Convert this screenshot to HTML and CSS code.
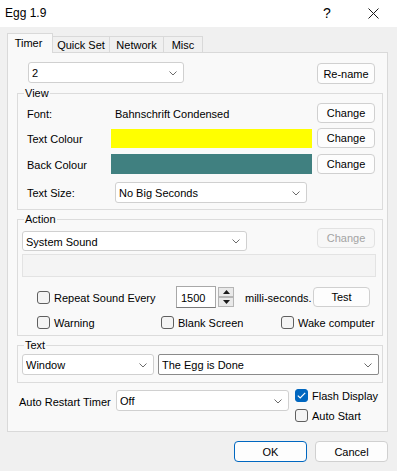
FILE: index.html
```html
<!DOCTYPE html>
<html>
<head>
<meta charset="utf-8">
<title>Egg 1.9</title>
<link rel="stylesheet" href="styles.css">
</head>
<body>
<div class="window">
  <div class="titlebar">
    <span class="title">Egg 1.9</span>
    <span class="tb-btn tb-help">?</span>
    <span class="tb-btn tb-close"><svg width="11" height="11" viewBox="0 0 11 11"><path d="M0.5 0.5 L10.5 10.5 M10.5 0.5 L0.5 10.5" stroke="#1a1a1a" stroke-width="1" fill="none"/></svg></span>
  </div>
  <div class="client">
    <div class="tabstrip">
      <div class="tab active t-timer">Timer</div>
      <div class="tab t-quick">Quick Set</div>
      <div class="tab t-network">Network</div>
      <div class="tab t-misc">Misc</div>
    </div>
    <div class="panel">
      <div class="row1">
        <div class="combo c-timer"><span class="ctext">2</span><svg class="chev" width="8" height="5" viewBox="0 0 8 5"><polyline points="0.5,0.5 4,4 7.5,0.5" fill="none" stroke="#6b6b6b" stroke-width="1"/></svg></div>
        <button class="btn rename">Re-name</button>
      </div>

      <div class="group g-view">
        <span class="legend">View</span>
        <div class="vrow r-font">
          <span class="vlabel">Font:</span>
          <span class="vmid fontval">Bahnschrift Condensed</span>
          <button class="btn vbtn">Change</button>
        </div>
        <div class="vrow r-colour">
          <span class="vlabel">Text Colour</span>
          <span class="vmid"><span class="swatch yellow"></span></span>
          <button class="btn vbtn">Change</button>
        </div>
        <div class="vrow r-back">
          <span class="vlabel">Back Colour</span>
          <span class="vmid"><span class="swatch teal"></span></span>
          <button class="btn vbtn">Change</button>
        </div>
        <div class="vrow r-size">
          <span class="vlabel">Text Size:</span>
          <span class="vmid"><span class="combo c-size"><span class="ctext">No Big Seconds</span><svg class="chev" width="8" height="5" viewBox="0 0 8 5"><polyline points="0.5,0.5 4,4 7.5,0.5" fill="none" stroke="#6b6b6b" stroke-width="1"/></svg></span></span>
        </div>
      </div>

      <div class="group g-action">
        <span class="legend">Action</span>
        <div class="arow a-sound">
          <div class="combo c-sound"><span class="ctext">System Sound</span><svg class="chev" width="8" height="5" viewBox="0 0 8 5"><polyline points="0.5,0.5 4,4 7.5,0.5" fill="none" stroke="#6b6b6b" stroke-width="1"/></svg></div>
          <button class="btn vbtn disabled" disabled>Change</button>
        </div>
        <div class="emptybox"></div>
        <div class="arow a-repeat">
          <label class="chk w-repeat"><span class="box"></span><span class="ctxt">Repeat Sound Every</span></label>
          <div class="edit">1500</div>
          <div class="spin">
            <span class="sp sp-up"><svg width="7" height="4" viewBox="0 0 7 4"><polygon points="0,4 3.5,0 7,4" fill="#1a1a1a"/></svg></span>
            <span class="sp sp-down"><svg width="7" height="4" viewBox="0 0 7 4"><polygon points="0,0 3.5,4 7,0" fill="#1a1a1a"/></svg></span>
          </div>
          <span class="milli">milli-seconds.</span>
          <button class="btn test">Test</button>
        </div>
        <div class="arow a-checks">
          <label class="chk w-warning"><span class="box"></span><span class="ctxt">Warning</span></label>
          <label class="chk w-blank"><span class="box"></span><span class="ctxt">Blank Screen</span></label>
          <label class="chk w-wake"><span class="box"></span><span class="ctxt">Wake computer</span></label>
        </div>
      </div>

      <div class="group g-text">
        <span class="legend">Text</span>
        <div class="trow">
          <div class="combo c-window"><span class="ctext">Window</span><svg class="chev" width="8" height="5" viewBox="0 0 8 5"><polyline points="0.5,0.5 4,4 7.5,0.5" fill="none" stroke="#6b6b6b" stroke-width="1"/></svg></div>
          <div class="combo c-egg"><span class="ctext">The Egg is Done</span><svg class="chev" width="8" height="5" viewBox="0 0 8 5"><polyline points="0.5,0.5 4,4 7.5,0.5" fill="none" stroke="#6b6b6b" stroke-width="1"/></svg></div>
        </div>
      </div>

      <div class="autorow">
        <span class="autolabel">Auto Restart Timer</span>
        <div class="combo c-off"><span class="ctext">Off</span><svg class="chev" width="8" height="5" viewBox="0 0 8 5"><polyline points="0.5,0.5 4,4 7.5,0.5" fill="none" stroke="#6b6b6b" stroke-width="1"/></svg></div>
        <div class="autochecks">
          <label class="chk"><span class="box checked"><svg width="9" height="7" viewBox="0 0 9 7"><polyline points="0.8,3.6 3.2,5.9 8.2,0.8" fill="none" stroke="#fff" stroke-width="1.2"/></svg></span><span class="ctxt">Flash Display</span></label>
          <label class="chk"><span class="box"></span><span class="ctxt">Auto Start</span></label>
        </div>
      </div>
    </div>

    <div class="buttons">
      <button class="btn dlg default">OK</button>
      <button class="btn dlg">Cancel</button>
    </div>
  </div>
</div>
</body>
</html>
```

FILE: styles.css
```css
* { box-sizing: border-box; }

html, body {
  margin: 0;
  padding: 0;
}

body {
  width: 397px;
  height: 471px;
  overflow: hidden;
  background: #f0f0f0;
  font-family: "Liberation Sans", Arial, sans-serif;
  font-size: 11px;
  color: #000;
}

.window {
  width: 397px;
  height: 471px;
}

/* title bar */
.titlebar {
  height: 27px;
  background: #ffffff;
  display: flex;
  align-items: center;
  padding-left: 5px;
}
.title {
  flex: 1;
  font-size: 12px;
  padding-bottom: 1px;
}
.tb-btn {
  width: 46px;
  height: 27px;
  display: flex;
  align-items: center;
  justify-content: center;
}
.tb-help {
  font-size: 14px;
  padding-bottom: 1px;
}
.tb-close {
  margin-right: 1px;
}

/* client */
.client {
  padding: 6px 9px 0 7px;
}

.tabstrip {
  display: flex;
  align-items: flex-end;
  height: 20px;
  margin-bottom: -1px;
  position: relative;
  z-index: 1;
}
.tab {
  height: 16px;
  margin-bottom: 1px;
  border: 1px solid #d9d9d9;
  border-bottom: none;
  background: #f0f0f0;
  display: flex;
  align-items: center;
  justify-content: center;
  margin-left: -1px;
  padding-top: 1px;
  white-space: nowrap;
}
.tab.active {
  height: 20px;
  margin-bottom: 0;
  margin-left: 0;
  background: #f9f9f9;
  padding-top: 0;
  padding-bottom: 1px;
}
.t-timer { width: 46px; padding-right: 3px; }
.t-quick { width: 58px; }
.t-network { width: 55px; }
.t-misc { width: 40px; }

.panel {
  width: 381px;
  height: 380px;
  border: 1px solid #d9d9d9;
  background: #f9f9f9;
  display: flex;
  flex-direction: column;
}

/* generic controls */
.btn {
  font-family: inherit;
  font-size: 11px;
  color: #000;
  background: #fdfdfd;
  border: 1px solid #d0d0d0;
  border-radius: 4px;
  padding: 0;
  margin: 0;
  display: flex;
  align-items: center;
  justify-content: center;
}
.btn.disabled {
  color: #a3a3a3;
  border-color: #e2e2e2;
  background: #f7f7f7;
}

.combo {
  display: flex;
  align-items: center;
  background: #ffffff;
  border: 1px solid #d0d0d0;
  border-radius: 3px;
  padding: 1px 6px 0 3px;
}
.combo .ctext {
  flex: 1;
  white-space: nowrap;
  overflow: hidden;
}
.chev {
  flex: none;
}

/* row 1 */
.row1 {
  display: flex;
  align-items: flex-start;
  height: 22px;
  margin-top: 9px;
  padding-left: 20px;
  padding-right: 12px;
}
.c-timer {
  width: 156px;
  height: 21px;
}
.rename {
  margin-left: auto;
  margin-top: 1px;
  width: 58px;
  height: 21px;
}

/* groups */
.group {
  position: relative;
  border: 1px solid #dcdcdc;
  margin: 9px 4px 0 9px;
  display: flex;
  flex-direction: column;
}
.legend {
  position: absolute;
  top: -8px;
  left: 6px;
  line-height: 14px;
  padding: 0 1px;
  background: #f9f9f9;
}
.g-view { height: 117px; }
.g-action { height: 117px; }
.g-text { height: 38px; }

.vrow {
  display: flex;
  align-items: center;
  height: 20px;
  padding-left: 9px;
}
.r-font { margin-top: 9px; }
.r-colour { margin-top: 5px; }
.r-back { margin-top: 6px; }
.r-size { margin-top: 8px; height: 21px; }

.vlabel {
  width: 84px;
  flex: none;
  white-space: nowrap;
  padding-top: 1px;
}
.vmid {
  width: 201px;
  flex: none;
  height: 100%;
  display: flex;
  align-items: center;
}
.fontval {
  padding-left: 4px;
  padding-top: 1px;
}
.vbtn {
  width: 58px;
  height: 20px;
  margin-left: 5px;
}
.swatch {
  display: block;
  width: 201px;
}
.swatch.yellow {
  height: 19px;
  margin-top: 1px;
  background: #ffff00;
}
.swatch.teal {
  height: 20px;
  background: #408080;
}
.c-size {
  margin-left: 4px;
  width: 192px;
  height: 21px;
}

/* action */
.arow {
  display: flex;
  align-items: center;
}
.a-sound {
  margin-top: 8px;
  height: 23px;
  padding-left: 4px;
  align-items: flex-start;
}
.c-sound {
  width: 225px;
  height: 20px;
  margin-top: 3px;
}
.a-sound .vbtn {
  margin-left: 70px;
  height: 20px;
}
.emptybox {
  margin: 3px 6px 0 4px;
  height: 23px;
  border: 1px solid #e3e3e3;
  background: #f4f4f4;
}

.a-repeat {
  margin-top: 9px;
  height: 22px;
  padding-left: 19px;
}
.chk {
  display: flex;
  align-items: center;
  white-space: nowrap;
}
.ctxt {
  padding-top: 1px;
}
.box {
  width: 13px;
  height: 13px;
  flex: none;
  border: 1px solid #5f5f5f;
  border-radius: 3px;
  background: #f4f4f4;
  margin-right: 4px;
  display: flex;
  align-items: center;
  justify-content: center;
}
.box.checked {
  background: #0067c0;
  border-color: #0067c0;
}
.w-repeat { width: 139px; }
.edit {
  width: 40px;
  height: 22px;
  border: 1px solid #a8a8a8;
  border-bottom-color: #7a7a7a;
  background: #ffffff;
  padding: 1px 0 0 4px;
  display: flex;
  align-items: center;
}
.spin {
  margin-left: 2px;
  width: 16px;
  height: 20px;
  display: flex;
  flex-direction: column;
}
.sp {
  height: 10px;
  border: 1px solid #b5b5b5;
  background: #e9e9e9;
  display: flex;
  align-items: center;
  justify-content: center;
}
.milli {
  width: 68px;
  margin-left: 11px;
  white-space: nowrap;
  padding-top: 1px;
}
.test {
  width: 57px;
  height: 20px;
}

.a-checks {
  margin-top: 7px;
  height: 14px;
  padding-left: 19px;
}
.w-warning { width: 124px; }
.w-blank { width: 120px; }

/* text group */
.trow {
  display: flex;
  margin-top: 8px;
  padding-left: 4px;
  gap: 4px;
}
.c-window {
  width: 132px;
  height: 21px;
}
.c-egg {
  width: 221px;
  height: 21px;
  border-color: #8a8a8a;
  border-radius: 2px;
}

/* auto restart */
.autorow {
  display: flex;
  margin-top: 6px;
  padding-left: 11px;
}
.autolabel {
  width: 97px;
  height: 22px;
  margin-top: 1px;
  padding-top: 1px;
  display: flex;
  align-items: center;
  white-space: nowrap;
}
.c-off {
  width: 173px;
  height: 21px;
  margin-top: 1px;
}
.autochecks {
  margin-left: 6px;
  display: flex;
  flex-direction: column;
  gap: 7px;
}
.autochecks .chk {
  height: 13px;
}

/* dialog buttons */
.buttons {
  display: flex;
  justify-content: flex-end;
  gap: 8px;
  margin-top: 9px;
}
.dlg {
  width: 73px;
  height: 21px;
}
.dlg.default {
  border-color: #0067c0;
}
```
